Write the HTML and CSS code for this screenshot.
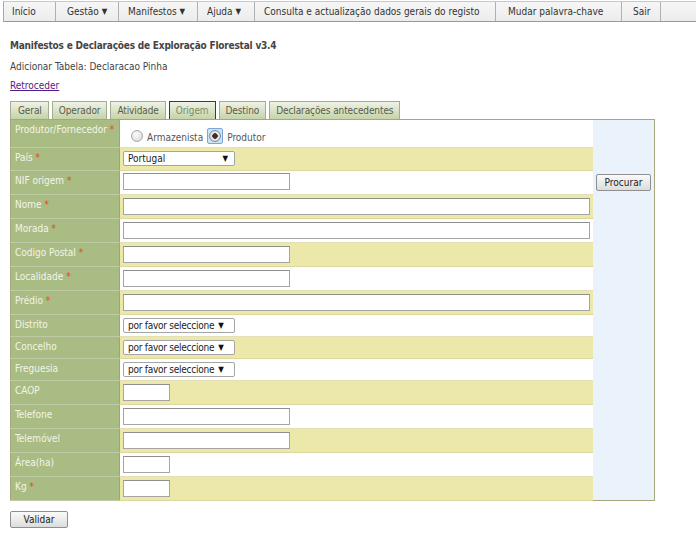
FILE: index.html
```html
<!DOCTYPE html>
<html lang="pt">
<head>
<meta charset="utf-8">
<title>Manifestos e Declarações de Exploração Florestal</title>
<link rel="stylesheet" href="styles.css">
</head>
<body>
<nav class="menu">
  <a class="mi mi-home" href="#">Início</a>
  <a class="mi mi-gestao" href="#">Gestão <span class="caret">▼</span></a>
  <a class="mi mi-manif" href="#">Manifestos <span class="caret">▼</span></a>
  <a class="mi mi-ajuda" href="#">Ajuda <span class="caret">▼</span></a>
  <a class="mi mi-consulta" href="#">Consulta e actualização dados gerais do registo</a>
  <a class="mi mi-mudar" href="#">Mudar palavra-chave</a>
  <a class="mi mi-sair" href="#">Sair</a>
</nav>
<main class="page">
  <h1 class="title">Manifestos e Declarações de Exploração Florestal v3.4</h1>
  <p class="sub">Adicionar Tabela: Declaracao Pinha</p>
  <p class="back"><a href="#">Retroceder</a></p>
  <div class="tabs">
    <span class="tab tab-first">Geral</span>
    <span class="tab">Operador</span>
    <span class="tab">Atividade</span>
    <span class="tab active">Origem</span>
    <span class="tab">Destino</span>
    <span class="tab">Declarações antecedentes</span>
  </div>
  <table class="form">
    <tr class="r-radio">
      <th>Produtor/Fornecedor <span class="req">*</span></th>
      <td class="w">
        <span class="radio-group">
          <span class="radio"></span><span class="rlabel">Armazenista</span>
          <span class="radio-focus"><span class="radio checked"></span></span><span class="rlabel">Produtor</span>
        </span>
      </td>
      <td class="side"></td>
    </tr>
    <tr class="r-pais">
      <th>País <span class="req">*</span></th>
      <td class="y"><span class="select"><span class="sv">Portugal</span><span class="arr">▼</span></span></td>
      <td class="side"></td>
    </tr>
    <tr class="r-nif">
      <th>NIF origem <span class="req">*</span></th>
      <td class="w"><input class="in-md" type="text"></td>
      <td class="side"><button class="btn" type="button">Procurar</button></td>
    </tr>
    <tr>
      <th>Nome <span class="req">*</span></th>
      <td class="y"><input class="in-lg" type="text"></td>
      <td class="side"></td>
    </tr>
    <tr>
      <th>Morada <span class="req">*</span></th>
      <td class="w"><input class="in-lg" type="text"></td>
      <td class="side"></td>
    </tr>
    <tr>
      <th>Codigo Postal <span class="req">*</span></th>
      <td class="y"><input class="in-md" type="text"></td>
      <td class="side"></td>
    </tr>
    <tr>
      <th>Localidade <span class="req">*</span></th>
      <td class="w"><input class="in-md" type="text"></td>
      <td class="side"></td>
    </tr>
    <tr>
      <th>Prédio <span class="req">*</span></th>
      <td class="y"><input class="in-lg" type="text"></td>
      <td class="side"></td>
    </tr>
    <tr class="r-sel">
      <th>Distrito</th>
      <td class="w"><span class="select select-n"><span class="sv">por favor seleccione</span><span class="arr">▼</span></span></td>
      <td class="side"></td>
    </tr>
    <tr class="r-sel">
      <th>Concelho</th>
      <td class="y"><span class="select select-n"><span class="sv">por favor seleccione</span><span class="arr">▼</span></span></td>
      <td class="side"></td>
    </tr>
    <tr class="r-sel">
      <th>Freguesia</th>
      <td class="w"><span class="select select-n"><span class="sv">por favor seleccione</span><span class="arr">▼</span></span></td>
      <td class="side"></td>
    </tr>
    <tr>
      <th>CAOP</th>
      <td class="y"><input class="in-sm" type="text"></td>
      <td class="side"></td>
    </tr>
    <tr>
      <th>Telefone</th>
      <td class="w"><input class="in-md" type="text"></td>
      <td class="side"></td>
    </tr>
    <tr>
      <th>Telemóvel</th>
      <td class="y"><input class="in-md" type="text"></td>
      <td class="side"></td>
    </tr>
    <tr>
      <th>Área(ha)</th>
      <td class="w"><input class="in-sm" type="text"></td>
      <td class="side"></td>
    </tr>
    <tr>
      <th>Kg <span class="req">*</span></th>
      <td class="y"><input class="in-sm" type="text"></td>
      <td class="side"></td>
    </tr>
  </table>
  <div class="actions">
    <button class="btn btn-validar" type="button">Validar</button>
  </div>
</main>
</body>
</html>
```

FILE: styles.css
```css
* { box-sizing: border-box; }
html, body { margin: 0; padding: 0; background: #fff; }
body {
  font-family: "DejaVu Sans Condensed", "DejaVu Sans", sans-serif;
  font-size: 10px;
  color: #333;
}

/* top menu */
.menu {
  display: flex;
  margin: 1px 0 0 3px;
  height: 21px;
  border-top: 1px solid #c8c8c8;
  border-bottom: 1px solid #9a9a9a;
  border-left: 1px solid #a8a8a8;
  background: linear-gradient(#f6f6f6, #ececec);
}
.mi {
  display: flex;
  align-items: center;
  flex: none;
  padding: 0 0 0 9px;
  border-right: 1px solid #b0b0b0;
  color: #333;
  text-decoration: none;
  white-space: nowrap;
}
.mi-home { width: 52px; padding-left: 8px; }
.mi-gestao { width: 63px; padding-left: 11px; }
.mi-manif { width: 79px; }
.mi-ajuda { width: 57px; }
.mi-consulta { width: 241px; }
.mi-mudar { width: 126px; padding-left: 12px; }
.mi-sair { width: 39px; padding-left: 11px; }
.caret { font-size: 8px; margin-left: 3px; }

/* page */
.page { padding: 0 10px; }
.title {
  margin: 18px 0 0;
  font-size: 10px;
  line-height: 12px;
  font-weight: bold;
  letter-spacing: -0.2px;
  color: #444;
}
.sub { margin: 9px 0 0; line-height: 12px; color: #444; }
.back { margin: 7px 0 0; line-height: 12px; }
.back a { color: #551a8b; text-decoration: underline; }

/* tabs */
.tabs {
  display: flex;
  gap: 3px;
  margin-top: 9px;
  height: 18px;
  align-items: flex-end;
}
.tab {
  height: 18px;
  padding: 0 6px;
  display: flex;
  align-items: center;
  border: 1px solid #a3ae90;
  border-bottom: none;
  background: linear-gradient(#eef2e4, #c5d3a9);
  color: #5a5a4a;
  letter-spacing: -0.1px;
  white-space: nowrap;
}
.tab-first { padding: 0 6px 0 7px; }
.tab.active {
  border-color: #3c3c3c;
  color: #7c8a66;
}

/* form table */
.form {
  border-collapse: collapse;
  width: 645px;
  border: 1px solid #a6a77c;
}
.form th {
  width: 110px;
  padding: 4px 4px 0;
  text-align: left;
  vertical-align: top;
  font-weight: normal;
  color: #f3f4e8;
  background: #a9bc84;
  border-bottom: 1px solid #bfcba5;
  border-right: 1px solid #98a878;
  white-space: nowrap;
}
.req { color: #e2472a; }
.form td { padding: 3px 3px 0; vertical-align: top; }
.form td.w { background: #fff; border-bottom: 1px solid #e3dfb6; }
.form td.y { background: #ece8aa; border-bottom: 1px solid #dcd8a0; }
.form td.side {
  width: 61px;
  background: #eaf2fc;
  border: none;
  vertical-align: middle;
  padding: 0 3px;
}
.form tr { height: 24px; }
.form tr.r-sel { height: 22px; }
.form tr.r-pais { height: 23px; }
.form tr.r-nif td.w { padding-top: 2px; }
.form tr.r-radio { height: 28px; }
.form tr.r-radio td.w { vertical-align: middle; padding-top: 4px; }

input[type="text"] {
  display: block;
  height: 17px;
  margin: 0;
  padding: 0 2px;
  border: 1px solid #a5a5a5;
  border-top-color: #8e8e8e;
  background: #fff;
  font: inherit;
}
.in-md { width: 167px; }
.in-lg { width: 467px; }
.in-sm { width: 47px; }

.select {
  display: flex;
  align-items: center;
  justify-content: space-between;
  width: 112px;
  height: 15px;
  padding: 0 6px 0 4px;
  border: 1px solid #a5a5a5;
  border-radius: 2px;
  background: #fff;
  color: #222;
  white-space: nowrap;
  overflow: hidden;
}
.select-n { justify-content: flex-start; padding-left: 4px; }
.select-n .sv { letter-spacing: -0.25px; }
.select-n .arr { margin-left: 4px; }
.arr { font-size: 8px; color: #111; }

/* radios */
.radio-group { display: flex; align-items: center; padding-left: 8px; }
.radio {
  display: inline-block;
  width: 12px;
  height: 12px;
  border-radius: 50%;
  border: 1px solid #a9a9a9;
  background: radial-gradient(circle at 40% 35%, #fafafa, #d6d6d6);
}
.radio.checked {
  background: radial-gradient(circle, #333 0 2.5px, #e8e8e8 3px, #cfcfcf);
  border-color: #8c8c8c;
}
.radio-focus {
  display: inline-flex;
  padding: 1px;
  border: 1px solid #76a8e0;
  border-radius: 2px;
  background: #cde2f7;
  margin-left: 4px;
}
.rlabel { margin-left: 4px; color: #555; padding-top: 3px; }

/* buttons */
.btn {
  font: inherit;
  color: #222;
  height: 17px;
  padding: 0 6px;
  border: 1px solid #8f8f8f;
  border-radius: 2px;
  background: linear-gradient(#fafafa, #dcdcdc);
}
.side .btn { width: 55px; }
.actions { margin-top: 10px; }
.btn-validar { width: 58px; }
```
